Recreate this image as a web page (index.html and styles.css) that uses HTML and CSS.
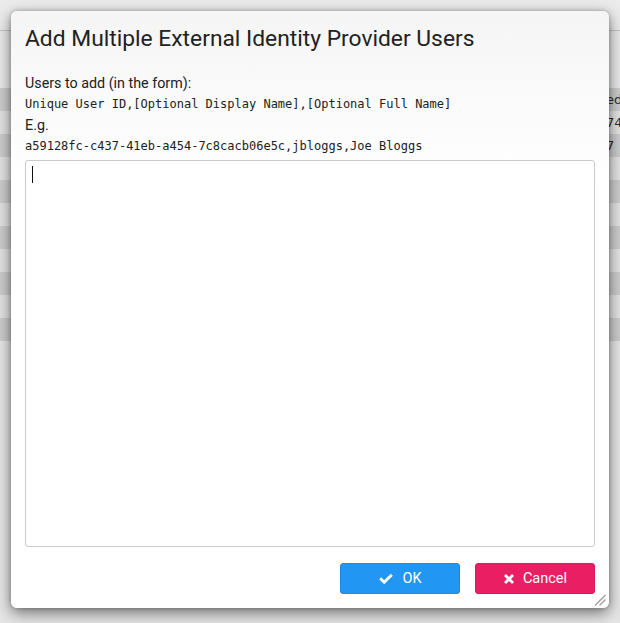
FILE: index.html
```html
<!DOCTYPE html>
<html lang="en">
<head>
<meta charset="utf-8">
<title>Add Multiple External Identity Provider Users</title>
<link rel="stylesheet" href="styles.css">
</head>
<body>
<div class="backdrop">
  <div class="topbar"></div>
  <div class="gap"></div>
  <div class="row dark"><span class="cell">ed</span></div>
  <div class="row light"><span class="cell">74</span></div>
  <div class="row dark"><span class="cell">7</span></div>
  <div class="row light"></div>
  <div class="row dark"></div>
  <div class="row light"></div>
  <div class="row dark"></div>
  <div class="row light"></div>
  <div class="row dark"></div>
  <div class="row light"></div>
  <div class="row dark"></div>
</div>

<div class="dialog">
  <h1 class="title">Add Multiple External Identity Provider Users</h1>
  <div class="text">Users to add (in the form):</div>
  <div class="mono">Unique User ID,[Optional Display Name],[Optional Full Name]</div>
  <div class="text">E.g.</div>
  <div class="mono">a59128fc-c437-41eb-a454-7c8cacb06e5c,jbloggs,Joe Bloggs</div>
  <div class="field">
    <textarea class="input" aria-label="Users to add"></textarea>
    <span class="caret"></span>
  </div>
  <div class="footer">
    <button class="btn ok" type="button">
      <svg class="icon" width="16" height="12" viewBox="0 0 16 12"><path d="M1.2 6.3 L3.2 4.3 L6.2 7.3 L12.8 0.7 L14.8 2.7 L6.2 11.3 Z" fill="#fff"/></svg>
      <span>OK</span>
    </button>
    <button class="btn cancel" type="button">
      <svg class="icon" width="12" height="12" viewBox="0 0 12 12"><path d="M1 3 L3 1 L6 4 L9 1 L11 3 L8 6 L11 9 L9 11 L6 8 L3 11 L1 9 L4 6 Z" fill="#fff"/></svg>
      <span>Cancel</span>
    </button>
  </div>
  <svg class="grip" width="12" height="12" viewBox="0 0 12 12"><path d="M1 11.5 L11.5 1 M5.5 11.5 L11.5 5.5" stroke="#9a9a9a" stroke-width="1.2" fill="none"/></svg>
</div>
</body>
</html>
```

FILE: styles.css
```css
html, body {
  margin: 0;
  padding: 0;
}

body {
  width: 620px;
  height: 623px;
  overflow: hidden;
  background: #e6e6e6;
  font-family: Roboto, "Liberation Sans", sans-serif;
  color: #212121;
  position: relative;
}

.backdrop {
  display: flex;
  flex-direction: column;
}

.topbar {
  height: 30px;
  background: #ebebeb;
  border-bottom: 1px solid #c4c4c4;
}

.gap {
  height: 57px;
  background: #e9e9e9;
}

.row {
  height: 23px;
  display: flex;
  align-items: center;
  font-family: "DejaVu Sans", sans-serif;
  font-size: 13px;
  color: #2a2a2a;
}

.row.dark {
  background: #cdcdcd;
}

.row.light {
  background: #e3e3e3;
}

.cell {
  margin-left: 606px;
  white-space: nowrap;
}

.dialog {
  position: absolute;
  left: 11px;
  top: 11px;
  width: 598px;
  height: 597px;
  box-sizing: border-box;
  padding: 15px 14px 14px 14px;
  border-radius: 6px;
  background: linear-gradient(to bottom, #f5f5f5 0, #ffffff 170px);
  box-shadow: 0 5px 15px rgba(0, 0, 0, 0.5), 0 0 4px rgba(0, 0, 0, 0.25);
  display: flex;
  flex-direction: column;
}

.title {
  margin: 0 0 21px 0;
  font-size: 22.8px;
  font-weight: 400;
  line-height: 26px;
  color: #222;
}

.text {
  font-size: 14.3px;
  line-height: 21px;
}

.mono {
  font-family: "DejaVu Sans Mono", monospace;
  font-size: 12px;
  line-height: 21px;
  white-space: nowrap;
}

.field {
  position: relative;
  flex: 1;
  margin-top: 3px;
  display: flex;
}

.input {
  flex: 1;
  margin: 0;
  box-sizing: border-box;
  border: 1px solid #cacaca;
  border-radius: 3px;
  background: #fff;
  resize: none;
  padding: 6px;
  font-family: "DejaVu Sans Mono", monospace;
  font-size: 14px;
  outline: none;
}

.caret {
  position: absolute;
  left: 7px;
  top: 6px;
  width: 1px;
  height: 17px;
  background: #111;
}

.footer {
  display: flex;
  justify-content: flex-end;
  gap: 15px;
  margin-top: 16px;
}

.btn {
  width: 120px;
  height: 31px;
  box-sizing: border-box;
  border-radius: 3px;
  border: 1px solid transparent;
  color: #fff;
  font-family: Roboto, "Liberation Sans", sans-serif;
  font-size: 14.5px;
  display: flex;
  align-items: center;
  justify-content: center;
  gap: 8px;
  padding: 0;
}

.btn.ok {
  background: #2196f3;
  border-color: #1e88e5;
}

.btn.cancel {
  background: #e91e63;
  border-color: #d81b60;
}

.icon {
  display: block;
}

.grip {
  position: absolute;
  right: 3px;
  bottom: 2px;
}
```
